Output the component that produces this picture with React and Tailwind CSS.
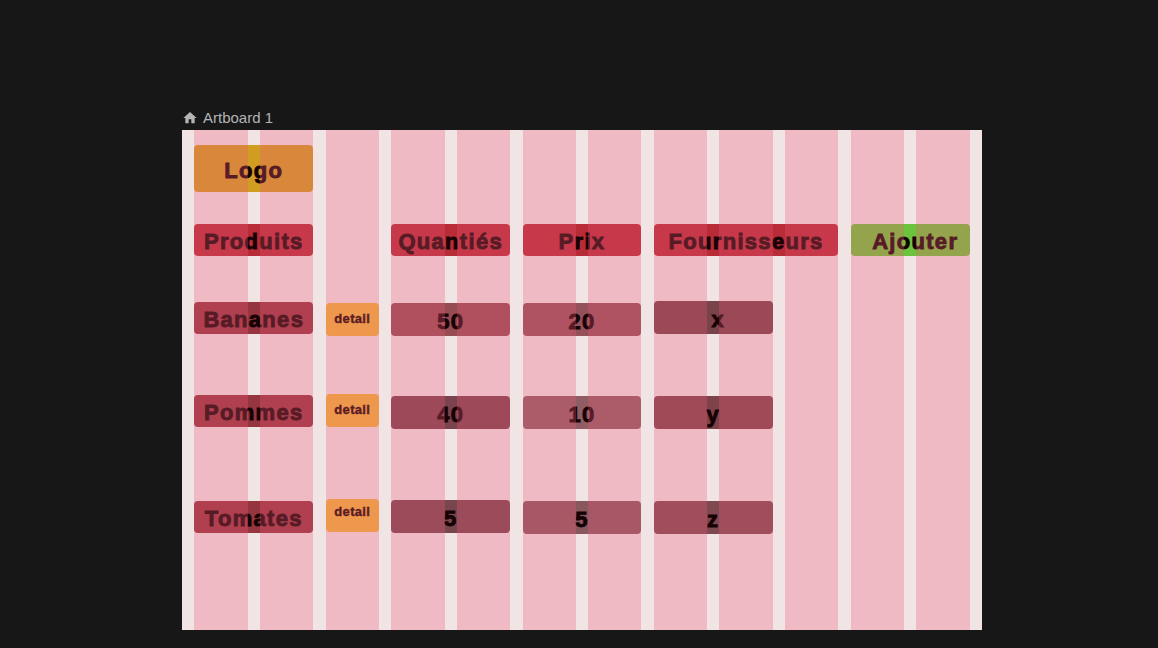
import React from 'react';

// cell background colours (under the pink grid overlay)
const rows = [
  { name: 'Bananes', qty: '50', price: '20', supplier: 'x', qtyBg: 'bg-[#954c53]', priceBg: 'bg-[#945159]', supBg: 'bg-[#78434a]', top: 'mt-[45px]', offs: ['mt-[1px]', 'mt-[2px]', 'mt-[2px]', 'mt-[2px]', 'mt-0'] },
  { name: 'Pommes', qty: '40', price: '10', supplier: 'y', qtyBg: 'bg-[#7b434d]', priceBg: 'bg-[#905d64]', supBg: 'bg-[#7e434a]', top: 'mt-[59px]', offs: ['mt-[1px]', 'mt-0', 'mt-[2px]', 'mt-[2px]', 'mt-[2px]'] },
  { name: 'Tomates', qty: '5', price: '5', supplier: 'z', qtyBg: 'bg-[#78464d]', priceBg: 'bg-[#89575e]', supBg: 'bg-[#7e4950]', top: 'mt-[71px]', offs: ['mt-[2px]', 'mt-0', 'mt-[1px]', 'mt-[2px]', 'mt-[2px]'] },
];

const big = "font-['Liberation_Sans',Arial,sans-serif] font-bold text-[22px] tracking-[1.3px] text-[#160104] leading-none pt-[4px] [-webkit-text-stroke:0.9px_#160104]";

function Cell({ className, children }) {
  return (
    <div className={`h-[32px] rounded-[4px] flex items-center justify-center ${big} ${className}`}>
      {children}
    </div>
  );
}

export default function App() {
  return (
    <div className="w-[1158px] h-[648px] bg-[#171717] pl-[182px] pt-[109px] overflow-hidden">
      <div className="h-[21px] flex items-start gap-[5px] pt-[1px] font-['Liberation_Sans',Arial,sans-serif] text-[15px] leading-[16px] text-[#b4b4b4]">
        <svg viewBox="0 0 24 24" className="w-[16px] h-[16px] fill-[#b4b4b4]">
          <path d="M10 20v-6h4v6h5v-8h3L12 3 2 12h3v8z" />
        </svg>
        <span>Artboard 1</span>
      </div>

      <div className="relative w-[800px] h-[500px] bg-[#f0e4e5]">
        <div className="px-[12.3px]">
          <div className="grid grid-cols-12 gap-x-[12.3px] pt-[15px]">
            <div className={`col-span-2 h-[47px] rounded-[4px] bg-[#d09c22] flex items-center justify-center ${big}`}>Logo</div>
          </div>

          <div className="grid grid-cols-12 gap-x-[12.3px] mt-[32px]">
            <Cell className="col-span-2 bg-[#b72c37]">Produits</Cell>
            <Cell className="col-start-4 col-span-2 bg-[#b72c37]">Quantiés</Cell>
            <Cell className="col-span-2 bg-[#b72c37]">Prix</Cell>
            <Cell className="col-span-3 bg-[#b72c37]">Fournisseurs</Cell>
            <Cell className="col-span-2 bg-[#6cc43c] pl-[10px]">Ajouter</Cell>
          </div>

          {rows.map((r) => (
            <div key={r.name} className={`grid grid-cols-12 gap-x-[12.3px] items-start h-[34px] ${r.top}`}>
              <Cell className={`col-span-2 bg-[#95363f] ${r.offs[0]}`}>{r.name}</Cell>
              <div className={`h-[33px] rounded-[4px] bg-[#edb33c] flex items-center justify-center font-['Liberation_Sans',Arial,sans-serif] font-bold text-[13px] tracking-[0.3px] text-[#1a0000] [-webkit-text-stroke:0.4px_#1a0000] ${r.offs[1]} ${r.name === 'Tomates' ? 'pb-[7px]' : 'pb-[2px]'}`}>
                detail
              </div>
              <Cell className={`col-span-2 h-[33px] ${r.qtyBg} ${r.offs[2]}`}>{r.qty}</Cell>
              <Cell className={`col-span-2 h-[33px] ${r.priceBg} ${r.offs[3]}`}>{r.price}</Cell>
              <Cell className={`col-span-2 h-[33px] ${r.supBg} ${r.offs[4]} ${r.supplier === 'x' ? 'pl-[10px]' : ''}`}>{r.supplier}</Cell>
            </div>
          ))}
        </div>

        {/* layout grid overlay */}
        <div className="absolute inset-0 px-[12.3px] grid grid-cols-12 gap-x-[12.3px] pointer-events-none">
          {Array.from({ length: 12 }).map((_, i) => (
            <div key={i} className="bg-[rgba(240,90,120,0.3)]" />
          ))}
        </div>
      </div>
    </div>
  );
}
